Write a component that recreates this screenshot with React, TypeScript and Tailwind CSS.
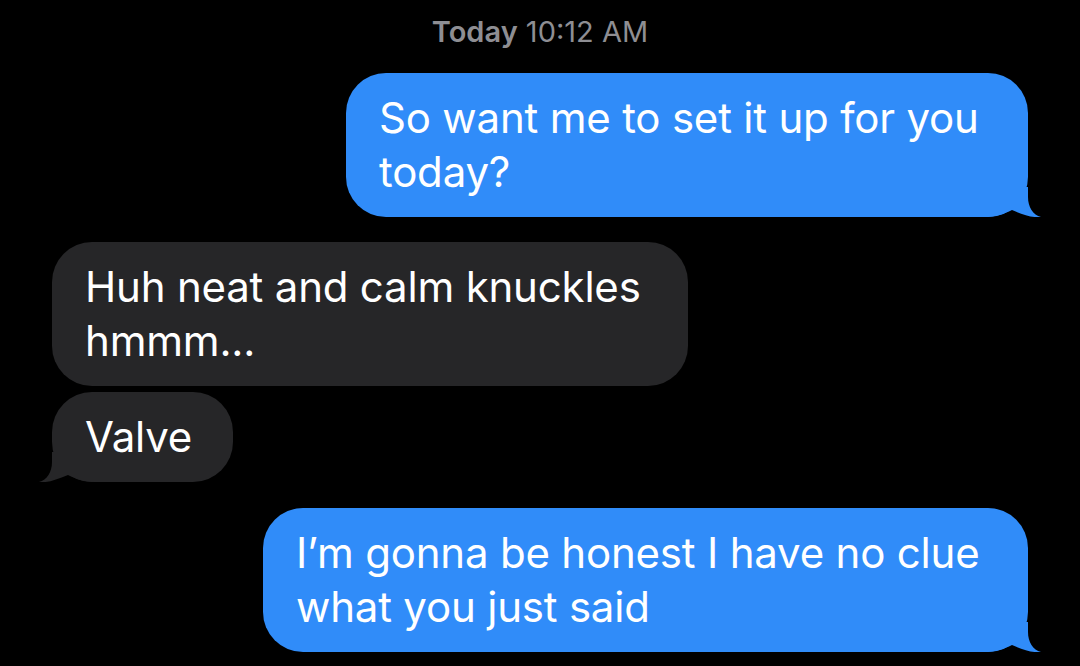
import React from 'react';

const BLUE = '#308cf9';
const GRAY = '#262628';

function Tail({ side, color }: { side: 'left' | 'right'; color: string }) {
  // tail hangs off the bottom corner of the bubble
  const pos = side === 'right' ? 'right-[-14px] bottom-0' : 'left-[-14px] bottom-0 -scale-x-100';
  return (
    <svg className={`absolute ${pos}`} width="56" height="30" viewBox="0 0 56 30">
      <path
        d="M0 0 L42 0 L42 10 C42 20 47 28 55 30 C47 31 38 28 26 23 C18 27 9 30 0 30 Z"
        fill={color}
      />
    </svg>
  );
}

function Bubble({
  from,
  width,
  tail,
  lines,
}: {
  from: 'me' | 'them';
  width: string;
  tail?: boolean;
  lines: string[];
}) {
  const mine = from === 'me';
  return (
    <div className={`flex ${mine ? 'justify-end' : 'justify-start'}`}>
      <div
        className={`relative rounded-[40px] px-[33px] py-[18px] text-[42px] leading-[54px] tracking-[-0.2px] text-white ${width} ${
          mine ? 'bg-[#308cf9]' : 'bg-[#262628]'
        }`}
      >
        {lines.map((l, i) => (
          <div key={i} className="whitespace-nowrap">
            {l}
          </div>
        ))}
        {tail && <Tail side={mine ? 'right' : 'left'} color={mine ? BLUE : GRAY} />}
      </div>
    </div>
  );
}

export default function App() {
  return (
    <div
      className="w-[1080px] h-[666px] bg-black overflow-hidden px-[52px] pt-[16px]"
      style={{ fontFamily: 'Inter, "Noto Sans", sans-serif' }}
    >
      <div className="text-center text-[29px] leading-[32px] text-[#8e8e93]">
        <span className="font-semibold">Today</span> 10:12 AM
      </div>

      <div className="mt-[25px]">
        <Bubble from="me" width="w-[682px]" tail lines={['So want me to set it up for you', 'today?']} />
      </div>

      <div className="mt-[25px] flex flex-col gap-[6px]">
        <Bubble from="them" width="w-[636px]" lines={['Huh neat and calm knuckles', 'hmmm...']} />
        <Bubble from="them" width="w-[181px]" tail lines={['Valve']} />
      </div>

      <div className="mt-[26px]">
        <Bubble
          from="me"
          width="w-[765px]"
          tail
          lines={['I\u2019m gonna be honest I have no clue', 'what you just said']}
        />
      </div>
    </div>
  );
}
